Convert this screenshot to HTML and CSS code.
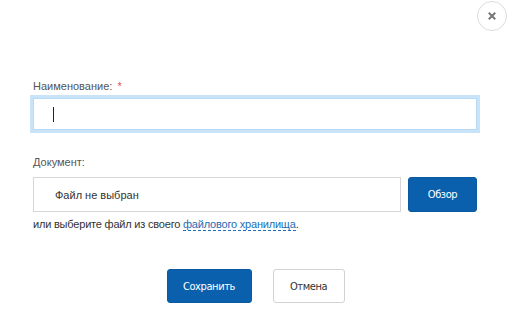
FILE: index.html
```html
<!DOCTYPE html>
<html lang="ru">
<head>
    <meta charset="UTF-8">
    <meta name="viewport" content="width=device-width, initial-scale=1.0">
    <title>Добавить документ</title>
    <link rel="stylesheet" href="styles.css">
</head>
<body>
    <div class="dialog">
        <div class="dialog-head">
            <button class="close" title="Закрыть">
                <svg width="10" height="10" viewBox="0 0 10 10"><path d="M2.5 2.5 L7.5 7.5 M7.5 2.5 L2.5 7.5" stroke="#777" stroke-width="2" stroke-linecap="square"/></svg>
            </button>
        </div>

        <!-- форма -->
        <div class="form">
            <label class="label label-name">Наименование: <span class="req">*</span></label>
            <div class="field"><span class="caret"></span></div>

            <label class="label label-doc">Документ:</label>
            <div class="file-row">
                <div class="file-box">Файл не выбран</div>
                <button class="btn btn-primary btn-browse">Обзор</button>
            </div>
            <p class="hint">или выберите файл из своего <a href="#">файлового хранилища</a>.</p>
        </div>

        <div class="actions">
            <button class="btn btn-primary btn-save">Сохранить</button>
            <button class="btn btn-cancel">Отмена</button>
        </div>
    </div>
</body>
</html>
```

FILE: styles.css
```css
body {
    margin: 0;
    background: #fff;
    font-family: "Liberation Sans", Arial, sans-serif;
    font-size: 11px;
    color: #333;
}
.dialog {
    width: 508px;
    height: 318px;
}
.dialog-head {
    display: flex;
    justify-content: flex-end;
    padding: 1px 1px 0 0;
}
.close {
    width: 30px;
    height: 30px;
    border-radius: 50%;
    border: 1px solid #dcdcdc;
    background: #fff;
    display: flex;
    align-items: center;
    justify-content: center;
    padding: 0;
    cursor: pointer;
}
.form {
    display: flex;
    flex-direction: column;
    width: 444px;
    margin-left: 33px;
}
.label {
    display: block;
    line-height: 14px;
    color: #555;
}
.label-name {
    margin-top: 48px;
    margin-bottom: 5px;
}
.req {
    color: #d9534f;
    margin-left: 2px;
}
.field {
    height: 30px;
    border: 1px solid #b8daf4;
    box-shadow: 0 0 0 3px #c9e4f8;
    background: #fff;
    display: flex;
    align-items: center;
    padding-left: 19px;
}
.caret {
    width: 1px;
    height: 15px;
    background: #222;
}
.label-doc {
    margin-top: 25px;
    margin-bottom: 8px;
}
.file-row {
    display: flex;
    gap: 7px;
}
.file-box {
    flex: 1;
    height: 33px;
    border: 1px solid #d6d6d6;
    display: flex;
    align-items: center;
    padding-left: 21px;
    color: #333;
}
.hint {
    margin: 5px 0 0;
    line-height: 14px;
    color: #333;
    letter-spacing: -0.2px;
}
.hint a {
    color: #1f6db5;
    text-decoration: none;
    border-bottom: 1px dashed #1f6db5;
}
.btn {
    font-family: "DejaVu Sans Condensed", "DejaVu Sans", sans-serif;
    font-stretch: condensed;
    font-weight: normal;
    font-size: 11px;
    letter-spacing: -0.4px;
    border-radius: 3px;
    cursor: pointer;
    padding: 0;
}
.btn-primary {
    background: #0a60ac;
    border: 1px solid #0a5aa2;
    color: #fff;
}
.btn-browse {
    width: 69px;
    height: 35px;
}
.actions {
    display: flex;
    justify-content: center;
    gap: 21px;
    margin-top: 38px;
    padding-left: 3px;
}
.btn-save {
    width: 85px;
    height: 34px;
}
.btn-cancel {
    width: 72px;
    height: 34px;
    background: #fff;
    border: 1px solid #d2d2d2;
    color: #333;
}
```
